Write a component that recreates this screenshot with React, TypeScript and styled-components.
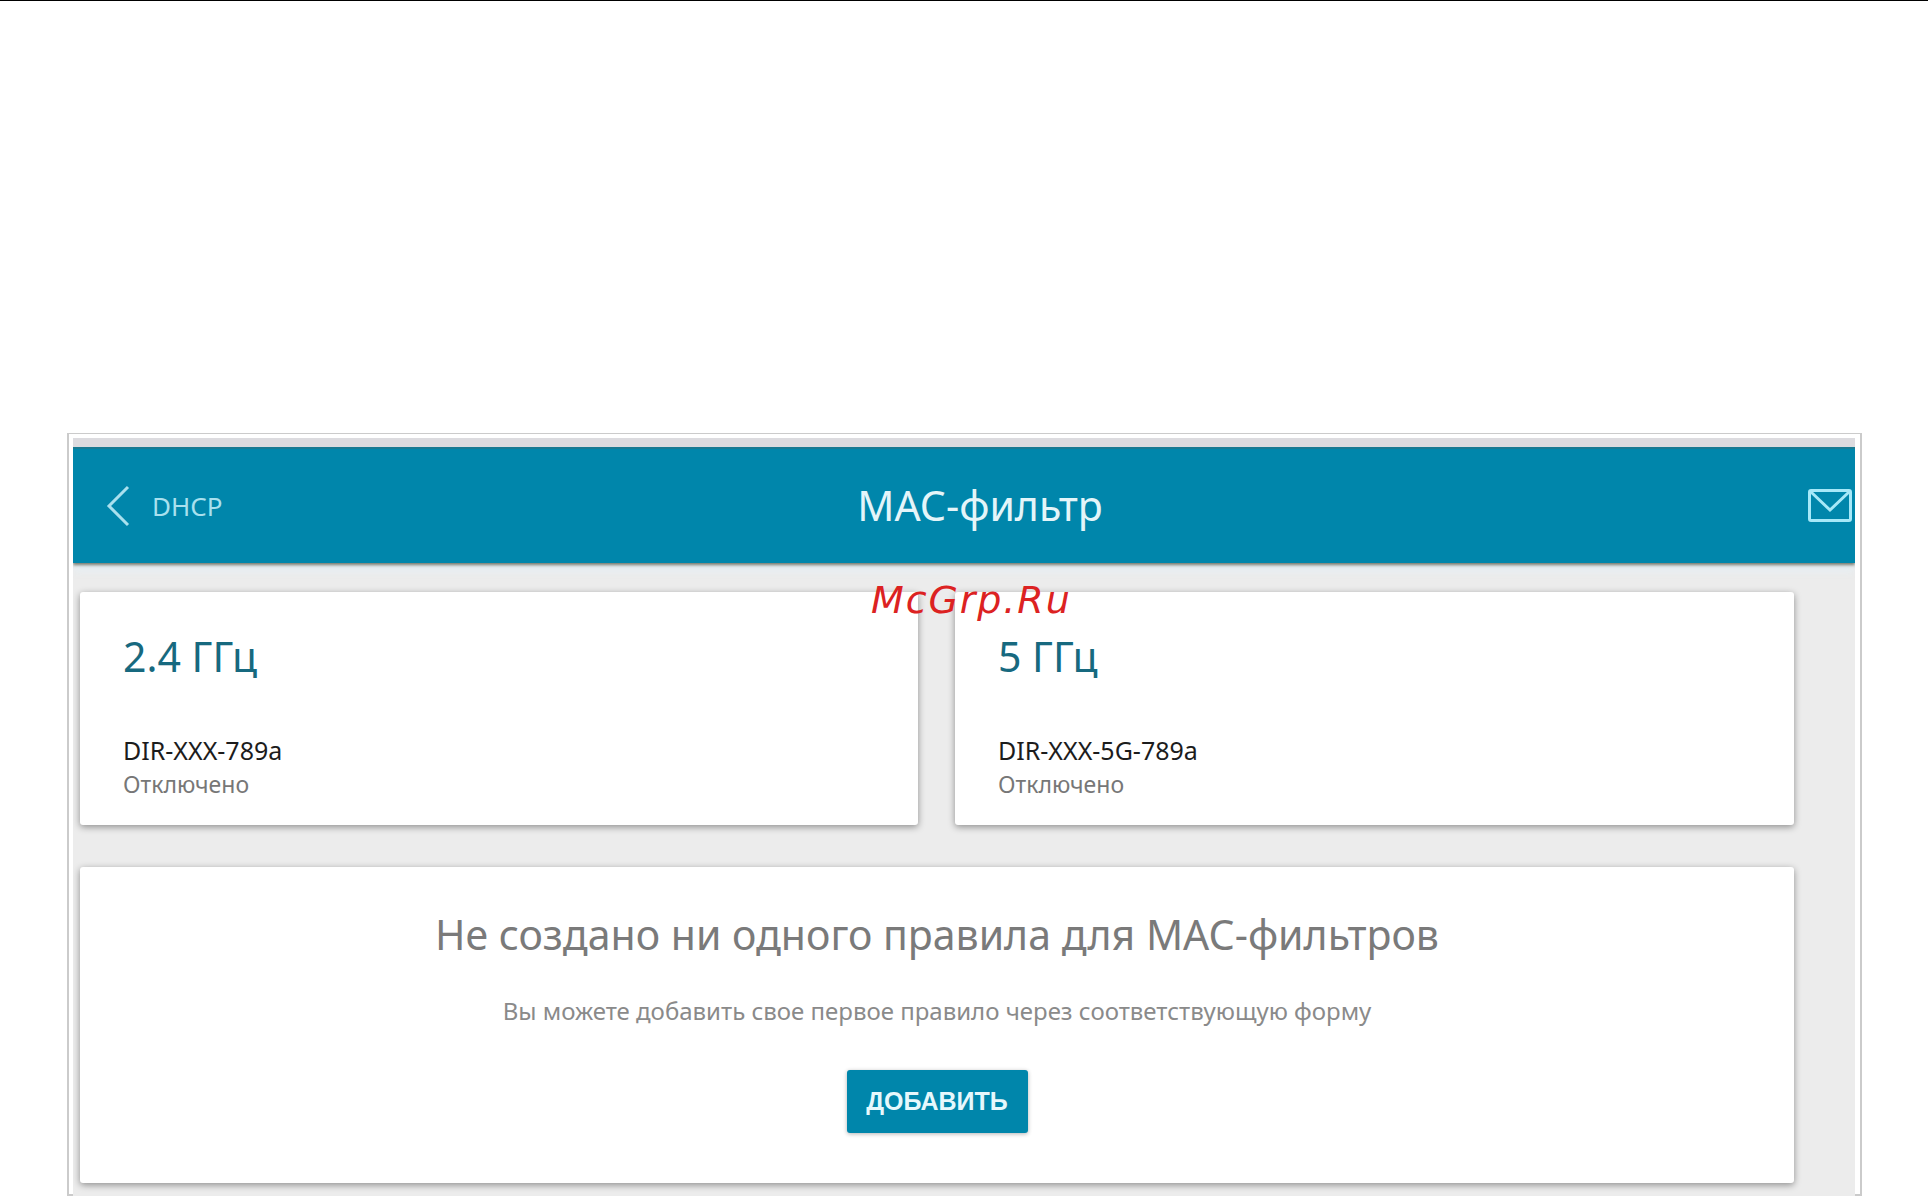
import React from "react";
import styled, { createGlobalStyle } from "styled-components";

const GlobalStyle = createGlobalStyle`
  html, body {
    margin: 0;
    padding: 0;
    background: #fff;
    font-family: "Noto Sans", "Open Sans", sans-serif;
  }
`;

const Page = styled.div`
  position: relative;
  width: 1928px;
  height: 1196px;
  overflow: hidden;
  border-top: 1px solid #000;
  box-sizing: border-box;
`;

const Frame = styled.div`
  box-sizing: border-box;
  width: 1795px;
  height: 763px;
  margin: 432px 0 0 67px;
  padding: 4px 5px 5px 4px;
  border: 2px solid #cbcbcb;
  border-top-width: 1px;
`;

const Screen = styled.div`
  height: 100%;
  display: flex;
  flex-direction: column;
  background: #ececec;
  border-top: 9px solid #dcdbdf;
  overflow: hidden;
`;

const Header = styled.header`
  flex: none;
  height: 116px;
  display: flex;
  align-items: center;
  padding: 0 3px 0 33px;
  background: #0086ab;
  box-shadow: 0 2px 3px rgba(70, 70, 50, 0.7), 0 8px 8px rgba(230, 240, 245, 0.9);
  border-top: 2px solid #197a92;
  box-sizing: border-box;
  color: #fff;
`;

const BackLink = styled.div`
  width: 300px;
  flex: none;
  display: flex;
  align-items: center;
  gap: 22px;
  color: #a9e0ee;
  font-size: 26px;
`;

const Title = styled.h1`
  flex: 1;
  margin: 0 0 2px;
  padding-left: 2px;
  text-align: center;
  font-size: 41px;
  font-weight: 400;
  color: #e4f5f9;
`;

const MailSlot = styled.div`
  width: 300px;
  flex: none;
  display: flex;
  justify-content: flex-end;
`;

const Content = styled.main`
  flex: 1;
  width: 1714px;
  margin-left: 7px;
  padding-top: 29px;
  display: flex;
  flex-direction: column;
  gap: 42px;
`;

const CardRow = styled.div`
  display: grid;
  grid-template-columns: 838px 839px;
  column-gap: 37px;
`;

const Card = styled.section`
  box-sizing: border-box;
  background: #fff;
  border-radius: 3px;
  box-shadow: 0 2px 7px rgba(0, 0, 0, 0.4);
`;

const BandCard = styled(Card)`
  height: 233px;
  padding: 35px 43px 0;
`;

const Band = styled.h2`
  margin: 0 0 48px;
  font-size: 41px;
  line-height: 58px;
  font-weight: 400;
  color: #17697f;
`;

const NetworkName = styled.div`
  font-size: 25px;
  line-height: 34px;
  color: #1c1c1c;
`;

const NetworkState = styled.div`
  font-size: 23px;
  line-height: 34px;
  color: #777;
`;

const EmptyCard = styled(Card)`
  height: 316px;
  display: flex;
  flex-direction: column;
  align-items: center;
  padding-top: 39px;
`;

const EmptyTitle = styled.h3`
  margin: 0;
  font-size: 41px;
  line-height: 56px;
  font-weight: 400;
  color: #7a7a7a;
`;

const EmptyText = styled.p`
  margin: 31px 0 0;
  font-size: 24px;
  line-height: 36px;
  color: #8a8a8a;
`;

const AddButton = styled.button`
  margin-top: 41px;
  width: 181px;
  height: 63px;
  border: 0;
  border-radius: 3px;
  background: #0086ab;
  color: #e6f8fc;
  font-family: "Liberation Sans", Arial, sans-serif;
  font-size: 25px;
  font-weight: 700;
  box-shadow: 0 1px 4px rgba(0, 0, 0, 0.3);
`;

const Watermark = styled.div`
  position: absolute;
  left: 871px;
  top: 577px;
  font-family: "DejaVu Sans", sans-serif;
  font-style: oblique;
  font-size: 38px;
  letter-spacing: 1.9px;
  line-height: 44px;
  color: #dc2222;
`;

const BackIcon = () => (
  <svg width="24" height="42" viewBox="0 0 24 42" fill="none" stroke="#a9e0ee" strokeWidth="3">
    <path d="M22 2 L3 21 L22 40" />
  </svg>
);

const MailIcon = () => (
  <svg width="44" height="34" viewBox="0 0 44 34" fill="none" stroke="#a6e8f8" strokeWidth="3">
    <rect x="1.5" y="1.5" width="41" height="30" rx="1.5" />
    <path d="M3 3 L22 21 L41 3" />
  </svg>
);

const App: React.FC = () => (
  <Page>
    <GlobalStyle />
    <Frame>
      <Screen>
        <Header>
          <BackLink>
            <BackIcon />
            <span>DHCP</span>
          </BackLink>
          <Title>МАС-фильтр</Title>
          <MailSlot>
            <MailIcon />
          </MailSlot>
        </Header>
        <Content>
          <CardRow>
            <BandCard>
              <Band>2.4 ГГц</Band>
              <NetworkName>DIR-XXX-789a</NetworkName>
              <NetworkState>Отключено</NetworkState>
            </BandCard>
            <BandCard>
              <Band>5 ГГц</Band>
              <NetworkName>DIR-XXX-5G-789a</NetworkName>
              <NetworkState>Отключено</NetworkState>
            </BandCard>
          </CardRow>
          <EmptyCard>
            <EmptyTitle>Не создано ни одного правила для МАС-фильтров</EmptyTitle>
            <EmptyText>Вы можете добавить свое первое правило через соответствующую форму</EmptyText>
            <AddButton>ДОБАВИТЬ</AddButton>
          </EmptyCard>
        </Content>
      </Screen>
    </Frame>
    <Watermark>McGrp.Ru</Watermark>
  </Page>
);

export default App;
